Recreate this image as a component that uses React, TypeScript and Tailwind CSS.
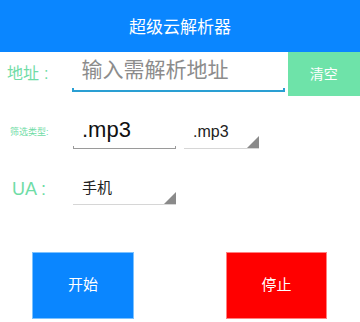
import React from "react"

const font = "font-['Liberation_Sans','Noto_Sans_CJK_SC',sans-serif]"

const Triangle = () => (
    <svg width="12" height="12" viewBox="0 0 12 12" className="shrink-0 block">
        <polygon points="12,0 12,12 0,12" fill="#8a8a8a" />
    </svg>
)

const Select = ({ value, width, textSize }: { value: string; width: string; textSize: string }) => {
    return (
        <div className={`flex items-end h-[32px] border-b border-[#d6d6d6] ${width}`}>
            <span className={`flex-1 self-center pl-[9px] text-[#222] ${textSize}`}>{value}</span>
            <Triangle />
        </div>
    )
}

const App = () => {
    return (
        <div className={`w-[360px] h-[322px] bg-white overflow-hidden ${font}`}>
            <div className="h-[52px] pt-[4px] bg-[#0a86ff] flex items-center justify-center text-white text-[17px]">
                超级云解析器
            </div>

            <div className="flex h-[44px]">
                <div className="w-[73px] pl-[7px] flex items-center text-[16px] text-[#6fdca6]">
                    地址<span className="ml-[5px]">:</span>
                </div>
                <div className="w-[214px] flex flex-col">
                    <div className="flex-1 flex items-center pl-[9px] text-[21px] text-[#8c8c8c]">输入需解析地址</div>
                    <div className="h-[4px] mb-[4px] border-x-2 border-b-2 border-[#2a9fd3]" />
                </div>
                <div className="w-[73px] ml-[3px] bg-[#6ee3a9] flex items-center justify-center text-white text-[14px]">
                    清空
                </div>
            </div>

            <div className="flex items-center mt-[20px]">
                <div className="w-[73px] pl-[10px] text-[9px] text-[#6fdca6]">筛选类型:</div>
                <div className="w-[103px] h-[33px] flex flex-col">
                    <div className="flex-1 min-h-0 flex items-center pl-[9px] pb-[2px] text-[22px] leading-[24px] text-[#111]">.mp3</div>
                    <div className="h-[3px] border-x border-b border-[#9a9a9a]" />
                </div>
                <div className="ml-[8px]">
                    <Select value=".mp3" width="w-[75px]" textSize="text-[16px]" />
                </div>
            </div>

            <div className="flex items-center mt-[24px]">
                <div className="w-[73px] pl-[12px] text-[18px] text-[#6fdca6]">
                    UA<span className="ml-[4px]">:</span>
                </div>
                <Select value="手机" width="w-[103px]" textSize="text-[15px]" />
            </div>

            <div className="flex mt-[47px]">
                <button className="ml-[32px] w-[102px] h-[67px] bg-[#0a86ff] border border-[#7cc2ff] text-white text-[15px]">
                    开始
                </button>
                <button className="ml-[92px] w-[101px] h-[67px] bg-[#ff0000] border border-[#ff8080] text-white text-[15px]">
                    停止
                </button>
            </div>
        </div>
    )
}

export default App
